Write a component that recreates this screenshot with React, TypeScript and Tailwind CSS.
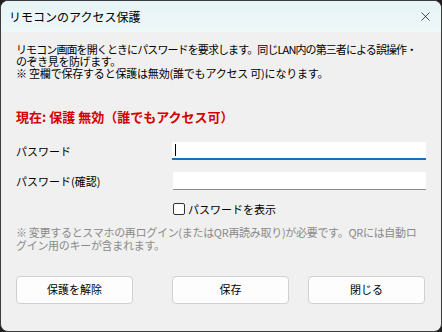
import React, { useState } from 'react';
import { X } from 'lucide-react';

const font = { fontFamily: '"Noto Sans CJK JP", "Noto Sans", sans-serif' };

export default function App() {
  const [show, setShow] = useState(false);

  return (
    <div className="w-[442px] h-[332px] bg-[#1e1e1e]" style={font}>
      <div className="w-full h-full rounded-[8px] border border-[#3c3c3c] bg-[#f0f0f0] overflow-hidden flex flex-col">
        {/* Title bar */}
        <div className="h-[31px] shrink-0 flex items-center justify-between pl-[8px] pr-[8px] bg-gradient-to-b from-[#e6f4f7] to-[#eff7f8]">
          <span className="text-[12px] text-black">リモコンのアクセス保護</span>
          <X className="w-[15px] h-[15px] text-black" strokeWidth={1.1} />
        </div>

        {/* Body */}
        <div className="flex-1 flex flex-col px-[15px] pt-[11px] text-black">
          <div className="text-[11px] leading-[12px] whitespace-nowrap">
            <div className="tracking-[-0.9px]">
              リモコン画面を開くときにパスワードを要求します。同じLAN内の第三者による誤操作・
            </div>
            <div className="tracking-[-0.4px]">のぞき見を防げます。</div>
            <div className="tracking-[-0.2px]">※ 空欄で保存すると保護は無効(誰でもアクセス 可)になります。</div>
          </div>

          <p className="mt-[30px] text-[13px] leading-[16px] font-bold text-[#d40000]">
            現在: 保護 無効（誰でもアクセス可）
          </p>

          <div className="mt-[17px] flex items-center">
            <label className="w-[156px] text-[11px]">パスワード</label>
            <div className="flex-1 h-[18px] bg-white border-b-2 border-[#1a6fb5] flex items-center pl-[3px]">
              <span className="w-px h-[12px] bg-black" />
            </div>
          </div>

          <div className="mt-[12px] flex items-center">
            <label className="w-[157px] text-[11px]">パスワード(確認)</label>
            <div className="flex-1 h-[18px] bg-white border-b border-[#8a8a8a]" />
          </div>

          <div className="mt-[11px] flex items-center pl-[157px]">
            <button
              onClick={() => setShow(!show)}
              className="w-[12px] h-[12px] rounded-[2px] border border-[#333] bg-white"
            />
            <span className="ml-[3px] text-[11px]">パスワードを表示</span>
          </div>

          <div className="mt-[8px] text-[11px] leading-[13px] text-[#8a8a8a] tracking-[-0.3px] whitespace-nowrap">
            <div>※ 変更するとスマホの再ログイン(またはQR再読み取り)が必要です。QRには自動ロ</div>
            <div>グイン用のキーが含まれます。</div>
          </div>

          <div className="mt-[24px] flex">
            <button className="w-[117px] h-[28px] bg-[#fdfdfd] border border-[#d0d0d0] rounded-[4px] text-[11px]">
              保護を解除
            </button>
            <button className="w-[117px] h-[28px] ml-[39px] bg-[#fdfdfd] border border-[#d0d0d0] rounded-[4px] text-[11px]">
              保存
            </button>
            <button className="w-[117px] h-[28px] ml-[19px] bg-[#fdfdfd] border border-[#d0d0d0] rounded-[4px] text-[11px]">
              閉じる
            </button>
          </div>
        </div>
      </div>
    </div>
  );
}
